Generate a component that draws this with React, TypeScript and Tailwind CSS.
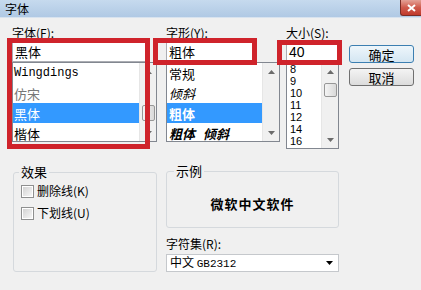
import type { ReactNode } from "react";

function Label({ children }: { children: ReactNode }) {
  return <div className="h-[14px] text-[12px] leading-[14px]">{children}</div>;
}

function Arrow({ up }: { up?: boolean }) {
  return (
    <svg width="7" height="4" viewBox="0 0 7 4" className="text-[#6b6b6b]">
      <path d={up ? "M3.5 0 L7 4 L0 4 Z" : "M0 0 L7 0 L3.5 4 Z"} fill="currentColor" />
    </svg>
  );
}

function ScrollBar({ thumb }: { thumb?: string }) {
  return (
    <div className="flex w-[17px] flex-col border-l border-[#e6e6e6] bg-[#f0f0f0]">
      <div className="flex h-[17px] items-center justify-center">
        <Arrow up />
      </div>
      <div className="flex flex-1 flex-col items-center">
        {thumb && (
          <div
            className={`${thumb} w-[13px] rounded-[2px] border border-[#979797] bg-gradient-to-r from-[#f4f4f4] to-[#d9d9d9]`}
          />
        )}
      </div>
      <div className="flex h-[17px] items-center justify-center">
        <Arrow />
      </div>
    </div>
  );
}

function CheckBox({ label }: { label: string }) {
  return (
    <div className="flex items-center gap-[3px]">
      <div className="h-[13px] w-[13px] border border-[#8e8f8f] bg-white p-[1px]">
        <div className="h-full w-full bg-gradient-to-br from-[#d3d3d3] to-[#f6f6f6]" />
      </div>
      <span className="text-[12px] leading-[14px]">{label}</span>
    </div>
  );
}

export default function App() {
  return (
    <div className="relative h-[290px] w-[421px] overflow-hidden bg-[#f0f0f0] font-['Noto_Sans_CJK_SC',sans-serif] text-[12px] leading-none text-black">
      {/* title bar */}
      <div className="flex h-[18px] items-start justify-between border-b border-[#d8e3ef] bg-gradient-to-b from-[#c6daee] to-[#b0c9e4]">
        <span className="pl-[5px] pt-[2px] text-[12px] leading-[13px]">字体</span>
        <div className="flex h-[16px] w-[21px] items-center justify-center rounded-bl-[3px] border-b border-l border-[#7a2d26] bg-gradient-to-b from-[#e3a197] via-[#cf5a4c] to-[#c0392b]">
          <svg width="9" height="8" viewBox="0 0 9 8">
            <path d="M1 1 L8 7 M8 1 L1 7" stroke="white" strokeWidth="2" />
          </svg>
        </div>
      </div>

      {/* top row */}
      <div className="flex pl-[12px] pt-[8px]">
        <div className="w-[145px]">
          <Label>字体(F):</Label>
          <div className="mt-[1px] flex h-[21px] w-[136px] items-center border border-[#abadb3] bg-white pl-[2px] text-[13px] leading-[14px]">
            黑体
          </div>
          <div className="flex h-[80px] overflow-hidden border border-[#828790] bg-white">
            <div className="flex flex-1 flex-col">
              <div className="flex h-[20px] shrink-0 items-center pl-[1px] font-['Liberation_Mono',monospace] text-[12px]">
                Wingdings
              </div>
              <div className="flex h-[20px] shrink-0 items-center pl-[1px] text-[13px] text-[#777]">仿宋</div>
              <div className="flex h-[20px] shrink-0 items-center bg-[#3399ff] pl-[1px] text-[13px] text-white">
                黑体
              </div>
              <div className="flex h-[20px] shrink-0 items-center pl-[1px] text-[13px]">楷体</div>
            </div>
            <ScrollBar thumb="mt-[25px] h-[16px]" />
          </div>
        </div>

        <div className="ml-[9px] w-[114px]">
          <Label>字形(Y):</Label>
          <div className="mt-[1px] flex h-[21px] w-[90px] items-center border border-[#abadb3] bg-white pl-[2px] text-[13px] leading-[14px]">
            粗体
          </div>
          <div className="flex h-[80px] overflow-hidden border border-[#828790] bg-white">
            <div className="flex flex-1 flex-col">
              <div className="flex h-[20px] shrink-0 items-center pl-[2px] text-[13px]">常规</div>
              <div className="flex h-[20px] shrink-0 items-center pl-[2px] text-[13px] italic">倾斜</div>
              <div className="flex h-[20px] shrink-0 items-center bg-[#3399ff] pl-[2px] text-[13px] font-bold text-white">
                粗体
              </div>
              <div className="flex h-[20px] shrink-0 items-center gap-[8px] pl-[2px] text-[13px] font-bold italic">
                <span>粗体</span>
                <span>倾斜</span>
              </div>
            </div>
            <ScrollBar />
          </div>
        </div>

        <div className="ml-[6px] w-[53px]">
          <Label>大小(S):</Label>
          <div className="mt-[1px] flex h-[21px] items-center border border-[#abadb3] bg-white pl-[2px] font-['Liberation_Sans',sans-serif] text-[14px]">
            40
          </div>
          <div className="flex h-[87px] overflow-hidden border border-[#828790] bg-white">
            <div className="flex flex-1 flex-col pl-[3px] font-['Liberation_Sans',sans-serif] text-[11px] leading-[11px]">
              {["8", "9", "10", "11", "12", "14", "16"].map((s) => (
                <div key={s} className="flex h-[12px] shrink-0 items-center">
                  {s}
                </div>
              ))}
            </div>
            <ScrollBar thumb="mt-[3px] h-[14px]" />
          </div>
        </div>

        <div className="ml-[10px] flex w-[65px] flex-col gap-[5px] pt-[19px]">
          <button className="flex h-[18px] items-center justify-center rounded-[3px] border border-[#3c7fb1] bg-gradient-to-b from-[#eef6fb] to-[#d4e6f2] text-[13px]">
            确定
          </button>
          <button className="flex h-[18px] items-center justify-center rounded-[3px] border border-[#707070] bg-gradient-to-b from-[#f4f4f4] to-[#dcdcdc] text-[13px]">
            取消
          </button>
        </div>
      </div>

      {/* bottom row */}
      <div className="mt-[16px] flex pl-[13px]">
        <fieldset className="h-[107px] w-[144px] rounded-[3px] border border-[#d5d9dd]">
          <legend className="ml-[5px] px-[2px] text-[13px] leading-[14px]">效果</legend>
          <div className="mt-[5px] flex flex-col gap-[8px] pl-[7px]">
            <CheckBox label="删除线(K)" />
            <CheckBox label="下划线(U)" />
          </div>
        </fieldset>

        <div className="ml-[9px] w-[173px]">
          <fieldset className="-mt-[1px] h-[64px] rounded-[3px] border border-[#d5d9dd]">
            <legend className="ml-[7px] px-[2px] text-[13px] leading-[14px]">示例</legend>
            <div className="flex h-[48px] items-center justify-center pt-[2px] text-[13px] font-bold tracking-[1px]">
              微软中文软件
            </div>
          </fieldset>
          <div className="mt-[9px]">
            <Label>字符集(R):</Label>
          </div>
          <div className="mt-[3px] flex h-[18px] items-center justify-between border border-[#c5c8cc] bg-white pl-[3px] pr-[5px] text-[12px]">
            <span>
              中文 <span className="font-['Liberation_Mono',monospace] text-[11px]">GB2312</span>
            </span>
            <svg width="7" height="4" viewBox="0 0 7 4">
              <path d="M0 0 L7 0 L3.5 4 Z" fill="#000" />
            </svg>
          </div>
        </div>
      </div>

      {/* red annotation boxes */}
      <div className="absolute left-[7px] top-[38px] h-[111px] w-[143px] border-[5px] border-[#cf232b]" />
      <div className="absolute left-[153px] top-[38px] h-[27px] w-[104px] border-[5px] border-[#cf232b]" />
      <div className="absolute left-[277px] top-[40px] h-[25px] w-[65px] border-[5px] border-[#cf232b]" />
    </div>
  );
}
